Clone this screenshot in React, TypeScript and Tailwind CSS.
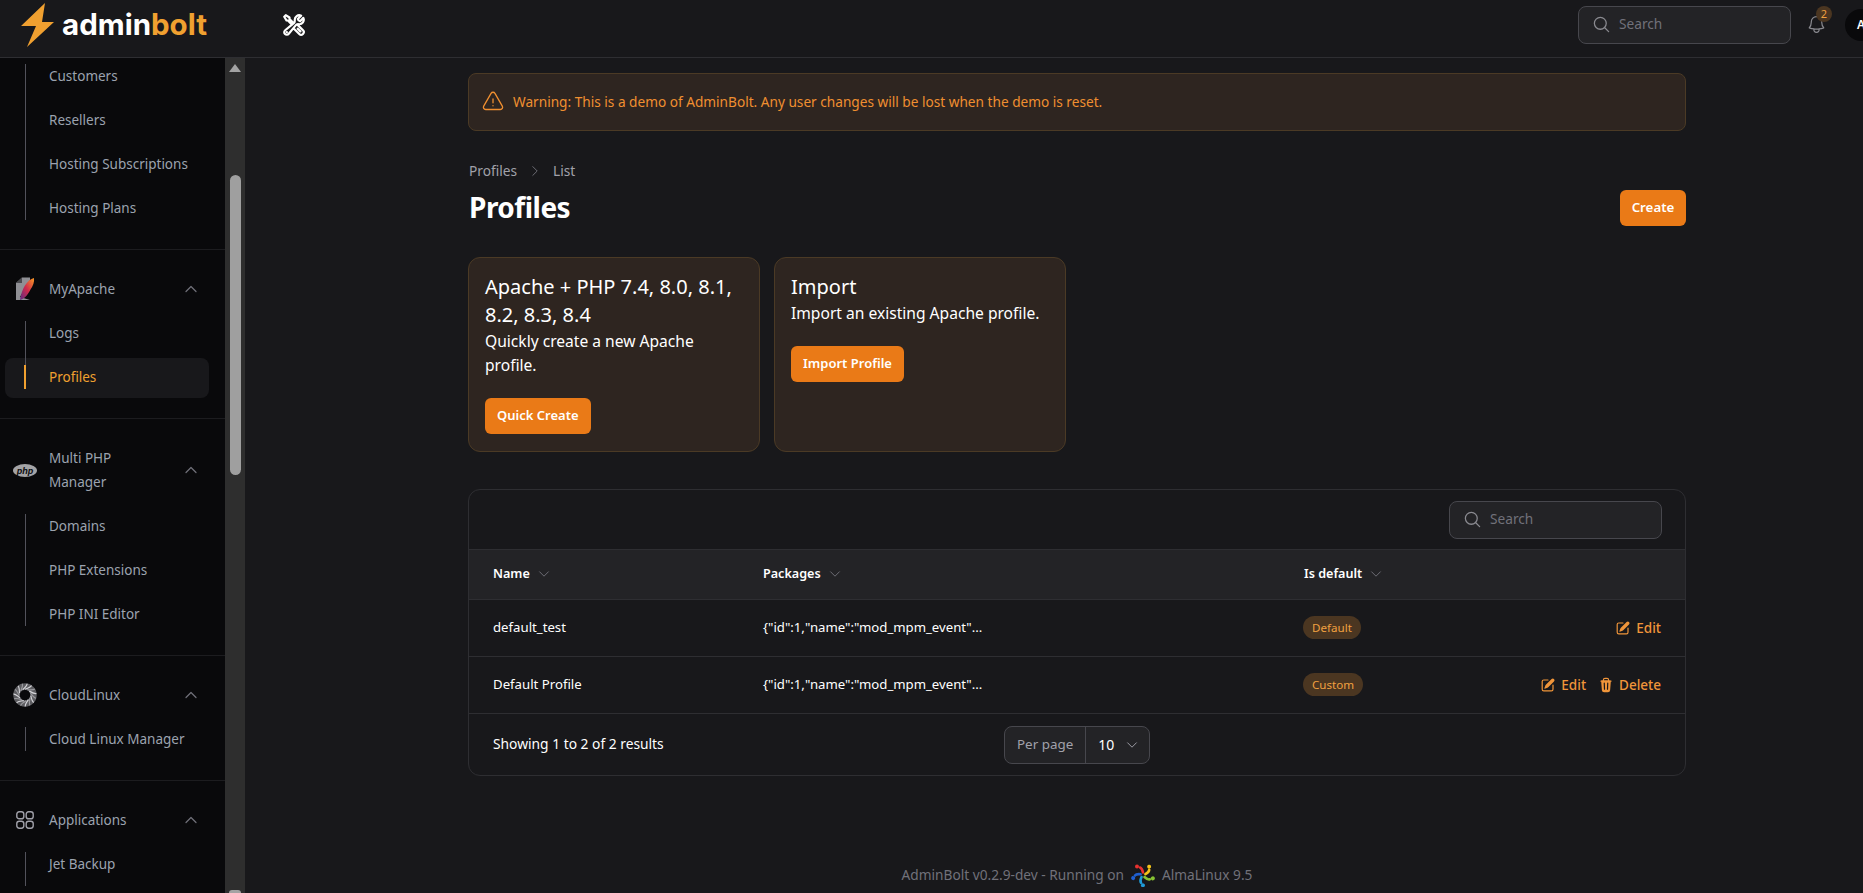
import {
  HiOutlineBell,
  HiOutlineChevronDown,
  HiOutlineChevronRight,
  HiOutlineChevronUp,
  HiOutlineExclamationTriangle,
  HiOutlineMagnifyingGlass,
  HiOutlineWrenchScrewdriver,
  HiMiniPencilSquare,
  HiMiniTrash,
} from "react-icons/hi2"

const font = "font-['Noto_Sans',sans-serif]"

function BoltLogo() {
  return (
    <div className="flex items-center">
      <svg width="34" height="44" viewBox="0 0 34 44" className="mr-[7px]">
        <path d="M24 0 L0 23 L15 23 L6 44 L33 19 L21 19 Z" fill="#f0a030" />
      </svg>
      <span className="font-['Inter',sans-serif] text-[29.5px] font-bold leading-none text-white">
        admin<span className="text-[#f0a030]">bolt</span>
      </span>
    </div>
  )
}

function ApacheIcon() {
  return (
    <svg width="20" height="24" viewBox="0 0 20 24">
      <path d="M1 6 L7 0.5 L15 0.5 L15 3 L5 20 L15 23 L1 23 Z" fill="#8f8f94" />
      <path d="M7 0.5 V6 H1 Z" fill="#4a4a4e" />
      <path d="M19 1 C12 3 7 11 5 23 C11 21 13 17 15.5 12.5 C18 9 19.5 5 19 1 Z" fill="url(#feather)" />
      <defs>
        <linearGradient id="feather" x1="0" y1="1" x2="1" y2="0">
          <stop offset="0" stopColor="#5b2a86" />
          <stop offset="0.5" stopColor="#d22a4a" />
          <stop offset="1" stopColor="#f59a23" />
        </linearGradient>
      </defs>
    </svg>
  )
}

function PhpIcon() {
  return (
    <svg width="24" height="13" viewBox="0 0 24 13">
      <ellipse cx="12" cy="6.5" rx="12" ry="6.5" fill="#a3a3a6" />
      <text x="12" y="9.5" textAnchor="middle" fontSize="9" fontWeight="700" fontStyle="italic" fontFamily="Liberation Sans, sans-serif" fill="#0a0a0c">
        php
      </text>
    </svg>
  )
}

function CloudLinuxIcon() {
  const blades = [0, 24, 48, 72, 96, 120, 144, 168, 192, 216, 240, 264, 288, 312, 336]
  return (
    <svg width="24" height="24" viewBox="0 0 24 24" fill="none">
      <circle cx="12" cy="12" r="8.5" stroke="#5c5c60" strokeWidth="6.5" />
      {blades.map((deg, i) => (
        <path
          key={deg}
          d="M12 6.2 C15 5.2 18 3.8 18.5 2.5"
          stroke={i % 2 === 0 ? "#d4d4d8" : "#9a9a9e"}
          strokeWidth="1.2"
          transform={`rotate(${deg} 12 12)`}
        />
      ))}
    </svg>
  )
}

function AppsIcon() {
  return (
    <svg width="18" height="18" viewBox="0 0 18 18" fill="none" stroke="#a1a1aa" strokeWidth="1.4">
      <rect x="0.8" y="0.8" width="7" height="7" rx="2.4" />
      <rect x="10.2" y="0.8" width="7" height="7" rx="2.4" />
      <rect x="0.8" y="10.2" width="7" height="7" rx="2.4" />
      <rect x="10.2" y="10.2" width="7" height="7" rx="2.4" />
    </svg>
  )
}

function AlmaIcon() {
  const arms = ["#e8312f", "#f2c21a", "#86c232", "#1f9ad6", "#1f5fd0"]
  return (
    <svg width="24" height="24" viewBox="0 0 24 24" fill="none">
      {arms.map((color, i) => (
        <g key={color} transform={`rotate(${i * 72} 12 12)`}>
          <path d="M12 9.5 C11.5 7 10.5 5 9 4.5" stroke={color} strokeWidth="2.6" strokeLinecap="round" />
          <circle cx="6" cy="3.6" r="2" fill={color} />
        </g>
      ))}
    </svg>
  )
}

function SubItem({ label, active, first, last }: { label: string; active?: boolean; first?: boolean; last?: boolean }) {
  return (
    <div className={`relative flex h-[44px] items-center pl-[49px] text-[13.5px] ${active ? "text-[#f0a030]" : "text-[#9ca3af]"}`}>
      {active && <div className="absolute left-[5px] right-[16px] top-[3px] h-[40px] rounded-lg bg-[#18181b]" />}
      <div className={`absolute left-[25px] w-px bg-[#52525b] ${first ? "top-[10px]" : "top-0"} ${last ? "bottom-[10px]" : "bottom-0"}`} />
      {active && <div className="absolute left-[24px] top-[10px] h-[24px] w-[2px] bg-[#f0a030]" />}
      <span className="relative">{label}</span>
    </div>
  )
}

function SectionHead({ icon, label }: { icon: React.ReactNode; label: React.ReactNode }) {
  return (
    <div className="flex items-center py-[10px] pr-[26px] text-[13.5px] text-[#9ca3af]">
      <div className="flex w-[49px] shrink-0 justify-center pl-[1px]">{icon}</div>
      <div className="flex-1 leading-[24px]">{label}</div>
      <HiOutlineChevronUp className="text-[#71717a]" size={16} strokeWidth={1.8} />
    </div>
  )
}

function Sidebar() {
  return (
    <aside className="flex h-full w-[245px] shrink-0">
      <div className="h-full w-[225px] overflow-hidden bg-[#09090b]">
        <div className="-mt-[4px]">
          <SubItem label="Customers" first />
          <SubItem label="Resellers" />
          <SubItem label="Hosting Subscriptions" />
          <SubItem label="Hosting Plans" last />
        </div>
        <div className="mt-[19px] border-t border-[#1c1c1f]" />
        <div className="pt-[17px]">
          <SectionHead icon={<ApacheIcon />} label="MyApache" />
          <SubItem label="Logs" first />
          <SubItem label="Profiles" active last />
        </div>
        <div className="mt-[19px] border-t border-[#1c1c1f]" />
        <div className="pt-[17px]">
          <SectionHead icon={<PhpIcon />} label={<>Multi PHP<br />Manager</>} />
          <SubItem label="Domains" first />
          <SubItem label="PHP Extensions" />
          <SubItem label="PHP INI Editor" last />
        </div>
        <div className="mt-[19px] border-t border-[#1c1c1f]" />
        <div className="pt-[17px]">
          <SectionHead icon={<CloudLinuxIcon />} label="CloudLinux" />
          <SubItem label="Cloud Linux Manager" first last />
        </div>
        <div className="mt-[19px] border-t border-[#1c1c1f]" />
        <div className="pt-[17px]">
          <SectionHead icon={<AppsIcon />} label="Applications" />
          <SubItem label="Jet Backup" first />
        </div>
      </div>
      <div className="flex h-full w-[20px] flex-col items-center bg-[#2e2e2e]">
        <div className="mt-[6px] h-0 w-0 border-x-[6px] border-b-[8px] border-x-transparent border-b-[#a3a3a3]" />
        <div className="mt-[103px] h-[300px] w-[11px] rounded-full bg-[#9f9f9f]" />
        <div className="mt-auto h-[3px] w-[12px] rounded-t-sm bg-[#a3a3a3]" />
      </div>
    </aside>
  )
}

function SearchBox({ width }: { width: string }) {
  return (
    <div className={`flex h-[38px] items-center rounded-lg border border-[#47474d] bg-[#232326] pl-[13px] text-[13.7px] text-[#71717a] ${width}`}>
      <HiOutlineMagnifyingGlass size={19} strokeWidth={1.6} className="text-[#8a8a90]" />
      <span className="ml-[8px]">Search</span>
    </div>
  )
}

function QuickCard({ title, text, action, width }: { title: string; text: string; action: string; width: string }) {
  return (
    <div className={`h-[195px] rounded-xl border border-[#4b3a25] bg-[#2e2520] px-[16px] pt-[15px] text-white ${width}`}>
      <div className="text-[20px] leading-[28px]">{title}</div>
      <div className="text-[15.6px] leading-[24px]">{text}</div>
      <button className="mt-[21px] h-[36px] rounded-md bg-[#ea7a17] px-[12px] text-[13px] font-semibold text-white">{action}</button>
    </div>
  )
}

function Badge({ label }: { label: string }) {
  return (
    <span className="rounded-full bg-[#4b3621] px-[9px] py-[4px] text-[11.6px] leading-[16px] text-[#f0a040]">{label}</span>
  )
}

function RowActions({ canDelete }: { canDelete?: boolean }) {
  return (
    <div className="flex items-center justify-end gap-[12px] text-[13.5px] font-medium text-[#f0953a]">
      <span className="flex items-center gap-[5px]">
        <HiMiniPencilSquare size={16} />
        Edit
      </span>
      {canDelete && (
        <span className="flex items-center gap-[5px]">
          <HiMiniTrash size={16} />
          Delete
        </span>
      )}
    </div>
  )
}

const packagesText = '{"id":1,"name":"mod_mpm_event"...'

function TableHead({ label, className }: { label: string; className: string }) {
  return (
    <div className={`flex items-center gap-[7px] text-[12.6px] font-semibold text-white ${className}`}>
      {label}
      <HiOutlineChevronDown size={14} strokeWidth={1.6} className="text-[#71717a]" />
    </div>
  )
}

function Row({ name, badge, canDelete }: { name: string; badge: string; canDelete?: boolean }) {
  return (
    <div className="flex h-[57px] items-center border-b border-[#2e2e32] pl-[24px] pr-[24px] text-[13.2px] text-white">
      <div className="w-[270px]">{name}</div>
      <div className="w-[540px]">{packagesText}</div>
      <div>
        <Badge label={badge} />
      </div>
      <div className="flex-1">
        <RowActions canDelete={canDelete} />
      </div>
    </div>
  )
}

export default function App() {
  return (
    <div className={`flex h-[893px] w-[1863px] flex-col overflow-hidden bg-[#18181b] ${font}`}>
      <header className="flex h-[58px] shrink-0 items-center border-b border-[#2e2e32] pb-[8px] pl-[21px]">
        <BoltLogo />
        <HiOutlineWrenchScrewdriver size={24} strokeWidth={2.2} className="ml-[75px] text-white" />
        <div className="ml-auto flex items-center">
          <SearchBox width="w-[213px]" />
          <div className="relative ml-[15px] mr-[18px]">
            <HiOutlineBell size={21} strokeWidth={1.4} className="text-[#8a8a90]" />
            <span className="absolute left-[10px] top-[-8px] flex h-[16px] w-[16px] items-center justify-center rounded-full bg-[#4b3621] text-[11px] text-[#f0a040]">2</span>
          </div>
          <div className="h-[32px] w-[18px] overflow-hidden">
            <div className="flex h-[32px] w-[32px] items-center justify-center rounded-full bg-[#09090b] text-xs font-semibold text-white">A</div>
          </div>
        </div>
      </header>

      <div className="flex min-h-0 flex-1">
        <Sidebar />
        <main className="flex min-w-0 flex-1 flex-col pl-[223px]">
          <div className="w-[1218px]">
            <div className="mt-[15px] flex h-[58px] items-center rounded-lg border border-[#4b3a25] bg-[#2e2520] pl-[12px] text-[13.65px] text-[#f08f30]">
              <HiOutlineExclamationTriangle size={24} strokeWidth={1.3} className="mr-[8px]" />
              Warning: This is a demo of AdminBolt. Any user changes will be lost when the demo is reset.
            </div>

            <div className="mt-[30px] flex items-center pl-[1px] text-[13.7px] leading-[20px] text-[#a1a1aa]">
              Profiles
              <HiOutlineChevronRight size={14} strokeWidth={1.6} className="mx-[11px] text-[#71717a]" />
              List
            </div>

            <div className="mt-[8px] flex items-start justify-between">
              <h1 className="pl-[1px] text-[28px] leading-[36px] font-bold tracking-[-0.5px] text-white">Profiles</h1>
              <button className="mt-[1px] h-[36px] w-[66px] rounded-md bg-[#ea7a17] text-[13.3px] font-semibold text-white">Create</button>
            </div>

            <div className="mt-[31px] flex gap-[14px]">
              <QuickCard title="Apache + PHP 7.4, 8.0, 8.1, 8.2, 8.3, 8.4" text="Quickly create a new Apache profile." action="Quick Create" width="w-[292px]" />
              <QuickCard title="Import" text="Import an existing Apache profile." action="Import Profile" width="w-[292px]" />
            </div>

            <div className="mt-[37px] overflow-hidden rounded-xl border border-[#2e2e32]">
              <div className="flex h-[60px] items-center justify-end border-b border-[#2e2e32] pr-[23px]">
                <SearchBox width="w-[213px]" />
              </div>
              <div className="flex h-[50px] items-center border-b border-[#2e2e32] bg-[#232326] pl-[24px]">
                <TableHead label="Name" className="w-[270px]" />
                <TableHead label="Packages" className="w-[541px]" />
                <TableHead label="Is default" className="" />
              </div>
              <Row name="default_test" badge="Default" />
              <Row name="Default Profile" badge="Custom" canDelete />
              <div className="flex h-[61px] items-center pl-[24px] text-[13.8px] text-white">
                <div className="w-[511px]">Showing 1 to 2 of 2 results</div>
                <div className="flex h-[38px] items-center rounded-lg border border-[#47474d] bg-[#232326]">
                  <span className="flex h-full items-center border-r border-[#47474d] px-[12px] text-[13.4px] text-[#a1a1aa]">Per page</span>
                  <span className="flex items-center gap-[11px] pl-[12px] pr-[10px] text-[14px]">
                    10
                    <HiOutlineChevronDown size={14} strokeWidth={1.6} className="text-[#a1a1aa]" />
                  </span>
                </div>
              </div>
            </div>

            <div className="mt-[87px] flex items-center justify-center text-[13.7px] text-[#71717a]">
              AdminBolt v0.2.9-dev - Running on
              <span className="mx-[7px]"><AlmaIcon /></span>
              AlmaLinux 9.5
            </div>
          </div>
        </main>
      </div>
    </div>
  )
}
